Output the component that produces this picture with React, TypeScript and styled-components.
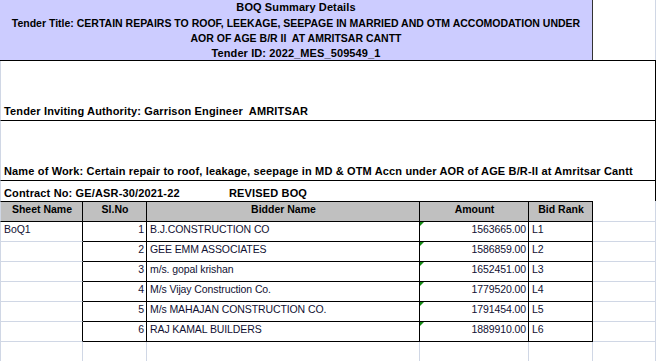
import React from 'react';
import styled, { createGlobalStyle } from 'styled-components';

const GRID = '#d0d7e5';
const LINE = '#000';

const GlobalStyle = createGlobalStyle`
    html, body {
        margin: 0;
        padding: 0;
        background: #fff;
    }
    body {
        font-family: 'Liberation Sans', Arial, sans-serif;
        font-size: 11px;
        color: #000;
    }
`;

const Sheet = styled.div`
    width: 656px;
    display: flex;
    flex-direction: column;
`;

const Banner = styled.div`
    display: flex;
    height: 60px;
    border-bottom: 1px solid ${LINE};
`;

const BannerTitle = styled.div`
    width: 592px;
    background: #ccccff;
    border-right: 1px solid #333;
    display: flex;
    flex-direction: column;
    align-items: center;
    font-weight: bold;
    line-height: 15px;
`;

const BannerLine = styled.div<{ $gap?: number; $caps?: boolean }>`
    margin-top: ${p => p.$gap || 0}px;
    white-space: nowrap;
    font-size: ${p => (p.$caps ? '10.5px' : '11px')};
    letter-spacing: ${p => (p.$caps ? '0' : '0.1px')};
`;

const BannerSpare = styled.div`
    flex: 1;
    border-right: 1px solid ${GRID};
`;

const InfoRow = styled.div<{ $height: number; $pad: number }>`
    height: ${p => p.$height}px;
    box-sizing: border-box;
    border-left: 1px solid ${GRID};
    border-right: 1px solid ${LINE};
    border-bottom: ${p => (p.$height > 30 ? `1px solid ${LINE}` : 'none')};
    display: flex;
    align-items: flex-end;
    padding: 0 0 ${p => p.$pad}px 3px;
    line-height: 13px;
    font-weight: bold;
    letter-spacing: 0.15px;
    white-space: nowrap;
`;

const Label = styled.span<{ $w: number }>`
    display: inline-block;
    width: ${p => p.$w}px;
`;

const Table = styled.div`
    display: grid;
    grid-template-columns: 83px 64px 273px 109px 64px 63px;
`;

type Kind = 'head' | 'cell' | 'blank';

const Cell = styled.div<{ $kind: Kind; $align?: 'left' | 'right' | 'center'; $first?: boolean; $top?: boolean }>`
    position: relative;
    height: ${p => (p.$top ? 21 : 20)}px;
    box-sizing: border-box;
    display: flex;
    align-items: center;
    justify-content: ${p => (p.$align === 'right' ? 'flex-end' : p.$align === 'center' ? 'center' : 'flex-start')};
    padding: 0 2px 4px 3px;
    line-height: 13px;
    font-size: 10.5px;
    letter-spacing: ${p => (p.$kind === 'head' ? '0' : '-0.1px')};
    white-space: nowrap;
    overflow: hidden;
    background: ${p => (p.$kind === 'head' ? '#c0c0c0' : '#fff')};
    font-weight: ${p => (p.$kind === 'head' ? 'bold' : 'normal')};
    color: ${p => (p.$kind === 'head' ? '#000' : '#111133')};
    border-right: 1px solid ${p => (p.$kind === 'blank' ? GRID : LINE)};
    border-bottom: 1px solid ${p => (p.$kind === 'blank' ? GRID : LINE)};
    border-left: ${p => (p.$first ? `1px solid ${GRID}` : 'none')};
    border-top: ${p => (p.$top ? `1px solid ${LINE}` : 'none')};
`;

const SideCell = styled(Cell)`
    border-right-color: ${LINE};
`;

const AmountCell = styled(Cell)`
    &::before {
        content: '';
        position: absolute;
        left: 0;
        top: 0;
        border-top: 4px solid #138a13;
        border-right: 4px solid transparent;
    }
`;

const HeadSpare = styled.div`
    height: 21px;
    box-sizing: border-box;
    border-right: 1px solid ${GRID};
    border-bottom: 1px solid ${GRID};
`;

const bids = [
    { no: 1, name: 'B.J.CONSTRUCTION CO', amount: '1563665.00', rank: 'L1' },
    { no: 2, name: 'GEE EMM ASSOCIATES', amount: '1586859.00', rank: 'L2' },
    { no: 3, name: 'm/s. gopal krishan', amount: '1652451.00', rank: 'L3' },
    { no: 4, name: 'M/s Vijay Construction Co.', amount: '1779520.00', rank: 'L4' },
    { no: 5, name: 'M/s MAHAJAN CONSTRUCTION CO.', amount: '1791454.00', rank: 'L5' },
    { no: 6, name: 'RAJ KAMAL BUILDERS', amount: '1889910.00', rank: 'L6' },
];

const App = () => {
    return (
        <>
            <GlobalStyle />
            <Sheet>
                <Banner>
                    <BannerTitle>
                        <BannerLine>BOQ Summary Details</BannerLine>
                        <BannerLine $gap={1} $caps>
                            Tender Title: CERTAIN REPAIRS TO ROOF, LEEKAGE, SEEPAGE IN MARRIED AND OTM ACCOMODATION UNDER
                        </BannerLine>
                        <BannerLine $caps>AOR OF AGE B/R II&nbsp; AT AMRITSAR CANTT</BannerLine>
                        <BannerLine>Tender ID: 2022_MES_509549_1</BannerLine>
                    </BannerTitle>
                    <BannerSpare />
                </Banner>
                <InfoRow $height={60} $pad={2}>
                    Tender Inviting Authority: Garrison Engineer&nbsp; AMRITSAR
                </InfoRow>
                <InfoRow $height={60} $pad={2}>
                    Name of Work: Certain repair to roof, leakage, seepage in MD &amp; OTM Accn under AOR of AGE B/R-II at Amritsar Cantt
                </InfoRow>
                <InfoRow $height={20} $pad={1}>
                    <Label $w={225}>Contract No: GE/ASR-30/2021-22</Label>
                    REVISED BOQ
                </InfoRow>
                <Table>
                    <Cell $kind='head' $align='center' $first $top>Sheet Name</Cell>
                    <Cell $kind='head' $align='center' $top>Sl.No</Cell>
                    <Cell $kind='head' $align='center' $top>Bidder Name</Cell>
                    <Cell $kind='head' $align='center' $top>Amount</Cell>
                    <Cell $kind='head' $align='center' $top>Bid Rank</Cell>
                    <HeadSpare />
                    {bids.map(b => (
                        <React.Fragment key={b.no}>
                            <SideCell $kind='blank' $first>{b.no === 1 ? 'BoQ1' : ''}</SideCell>
                            <Cell $kind='cell' $align='right'>{b.no}</Cell>
                            <Cell $kind='cell'>{b.name}</Cell>
                            <AmountCell $kind='cell' $align='right'>{b.amount}</AmountCell>
                            <Cell $kind='cell'>{b.rank}</Cell>
                            <Cell $kind='blank' />
                        </React.Fragment>
                    ))}
                    {[0, 1, 2, 3, 4, 5].map(i => (
                        <Cell key={i} $kind='blank' $first={i === 0} />
                    ))}
                </Table>
            </Sheet>
        </>
    );
};

export default App;
